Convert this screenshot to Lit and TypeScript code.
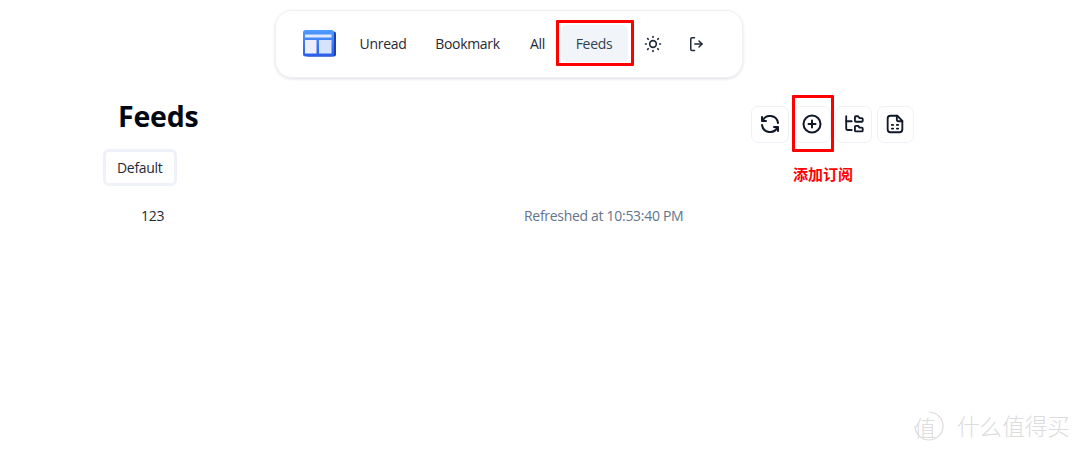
import { LitElement, html, css, svg } from "lit";
import { customElement } from "lit/decorators.js";

const icon = (body: unknown, size = 20) => html`<svg width=${size} height=${size} viewBox="0 0 24 24" fill="none" stroke="currentColor" stroke-width="2" stroke-linecap="round" stroke-linejoin="round">${body}</svg>`;

const sun = svg`<circle cx="12" cy="12" r="4"/><path d="M3 12h1m8-9v1m8 8h1m-9 8v1M5.6 5.6l.7.7m12.1-.7l-.7.7m0 11.4l.7.7m-12.1-.7l-.7.7"/>`;
const logout = svg`<path d="M10 3.5H7a2 2 0 0 0-2 2v13a2 2 0 0 0 2 2h3"/><path d="M16 8l4 4-4 4"/><path d="M20 12H10.5"/>`;
const refresh = svg`<path d="M20 11a8.1 8.1 0 0 0-15.5-2m-.5-4v4h4"/><path d="M4 13a8.1 8.1 0 0 0 15.5 2m.5 4v-4h-4"/>`;
const plus = svg`<circle cx="12" cy="12" r="8.5"/><path d="M8.5 12h7M12 8.5v7"/>`;
const tree = svg`<path d="M3.500 3.500v13a2 2 0 0 0 2 2h4"/><path d="M3.500 9h6"/><path d="M13 4.500a1 1 0 0 1 1-1h2.500l1.500 2h2.500a1 1 0 0 1 1 1v2a1 1 0 0 1-1 1h-6.500a1 1 0 0 1-1-1z"/><path d="M13 15a1 1 0 0 1 1-1h2.500l1.500 2h2.500a1 1 0 0 1 1 1v2a1 1 0 0 1-1 1h-6.500a1 1 0 0 1-1-1z"/>`;
const sheet = svg`<path d="M14.500 3H7a3 3 0 0 0-3 3v12a3 3 0 0 0 3 3h10a3 3 0 0 0 3-3V8.500z"/><path d="M14 3v4a2 2 0 0 0 2 2h4"/><path d="M8.500 13h1.500M14 13h1.500M8.500 17h1.500M14 17h1.500"/>`;

@customElement("app-root")
export class AppRoot extends LitElement {
  static styles = css`
    :host {
      display: block;
      position: relative;
      width: 1080px;
      height: 452px;
      overflow: hidden;
      background: #fff;
      font-family: "Open Sans", "Noto Sans", "Noto Sans CJK SC", sans-serif;
      font-size: 14px;
      letter-spacing: -0.3px;
      color: #1f2937;
    }
    .top { display: flex; justify-content: center; padding: 9.5px 63px 0 0; }
    .nav {
      display: flex;
      align-items: center;
      width: 468px;
      height: 68px;
      box-sizing: border-box;
      padding-left: 27px;
      border: 1px solid #eef0f4;
      border-radius: 17px;
      box-shadow: 0 1px 3px rgba(15, 23, 42, 0.14);
    }
    .logo { margin-right: 10px; display: block; }
    .links { display: grid; grid-template-columns: 75px 94px 46px 67px; }
    .link { height: 37px; display: flex; align-items: center; justify-content: center; line-height: 37px; }
    .link.active { background: #f1f5f9; border-radius: 6px; color: #334155; }
    .ico { display: flex; align-items: center; justify-content: center; height: 37px; color: #1f2937; }
    .ico.s { width: 50px; }
    .ico.l { width: 37px; }
    .body { padding: 0 0 0 103px; }
    .head { display: flex; justify-content: space-between; align-items: flex-start; width: 811px; margin-top: 18px; }
    h1 { margin: 0 0 0 15px; font-size: 28.500px; line-height: 40px; font-weight: 700; color: #030712; letter-spacing: -0.2px; }
    .tools { display: flex; gap: 4.200px; margin-top: 10px; }
    .tool {
      width: 37.500px;
      height: 37.500px;
      box-sizing: border-box;
      border: 1px solid #eef2f7;
      border-radius: 7px;
      display: flex;
      align-items: center;
      justify-content: center;
      color: #111827;
    }
    .tab {
      display: inline-block;
      margin-top: 6px;
      padding: 0 11px;
      height: 31px;
      line-height: 31px;
      background: #fff;
      border: 3.500px solid #eef2f8;
      border-radius: 6px;
    }
    .row { display: flex; margin-top: 19px; line-height: 22px; }
    .name { width: 421px; padding-left: 38px; box-sizing: border-box; }
    .time { color: #64748b; }
    .mark { position: absolute; border: 3px solid #ff0000; box-sizing: border-box; border-radius: 1px; }
    .m1 { left: 556px; top: 20px; width: 78px; height: 46px; }
    .m2 { left: 792px; top: 95px; width: 42px; height: 57px; }
    .note { position: absolute; left: 793px; top: 164px; font: 700 15px/20px "Noto Sans CJK SC", sans-serif; letter-spacing: 0; color: #ff0000; }
    .wm { position: absolute; left: 914px; top: 410px; display: flex; align-items: center; gap: 14px; color: #dcdcdc; letter-spacing: 0; font: 300 22.600px/32px "Noto Sans CJK SC", sans-serif; }
    .wm .seal { position: relative; width: 29px; font-size: 22px; line-height: 32px; }
    .wm .arc { position: absolute; left: 0; top: 1px; }
  `;

  render() {
    return html`
      <div class="top">
        <nav class="nav">
          <svg class="logo" width="33" height="27" viewBox="0 0 33 27">
            <defs>
              <linearGradient id="lg" x1="0" y1="0" x2="0" y2="1"><stop offset="0" stop-color="#4f9bff"/><stop offset="1" stop-color="#2a5ee8"/></linearGradient>
            </defs>
            <rect x="3" y="1.500" width="30" height="25" rx="2" fill="#1f3fb8"/>
            <rect width="31" height="26.500" rx="2.500" fill="url(#lg)"/>
            <rect x="2" y="4.500" width="26.500" height="3" fill="#dfe9ff"/>
            <rect x="2" y="10" width="11.500" height="13.500" fill="#eceefb"/>
            <rect x="16" y="10" width="12.500" height="13.500" fill="#d6e4fb"/>
          </svg>
          <div class="links">
            <div class="link">Unread</div>
            <div class="link">Bookmark</div>
            <div class="link">All</div>
            <div class="link active">Feeds</div>
          </div>
          <div class="ico s">${icon(sun, 20)}</div>
          <div class="ico l">${icon(logout, 18)}</div>
        </nav>
      </div>
      <main class="body">
        <div class="head">
          <h1>Feeds</h1>
          <div class="tools">
            <div class="tool">${icon(refresh, 24)}</div>
            <div class="tool">${icon(plus, 24)}</div>
            <div class="tool">${icon(tree, 22)}</div>
            <div class="tool">${icon(sheet, 22)}</div>
          </div>
        </div>
        <div class="tab">Default</div>
        <div class="row">
          <div class="name">123</div>
          <div class="time">Refreshed at 10:53:40 PM</div>
        </div>
      </main>
      <div class="mark m1"></div>
      <div class="mark m2"></div>
      <div class="note">添加订阅</div>
      <div class="wm">
        <span class="seal">值<svg class="arc" width="30" height="30" viewBox="0 0 30 30" fill="none" stroke="#dcdcdc" stroke-width="1.200"><path d="M15 1A14 14 0 1 1 1 15"/></svg></span>
        <span>什么值得买</span>
      </div>
    `;
  }
}
